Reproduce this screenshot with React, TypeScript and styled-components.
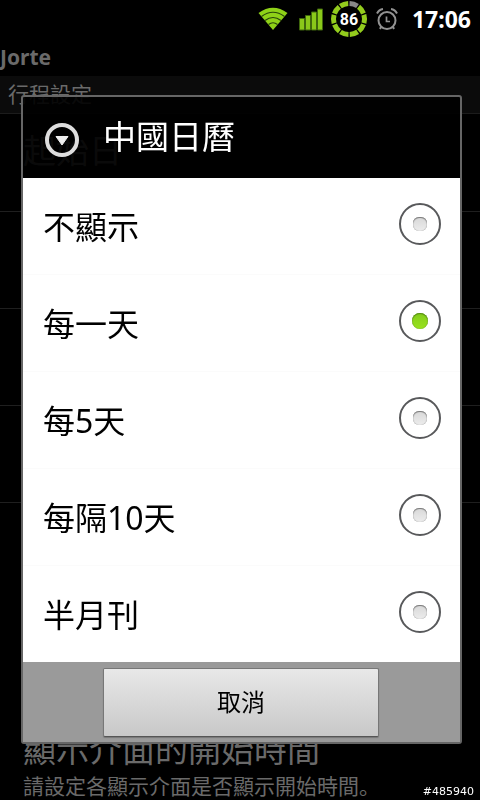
import React, { useState } from "react";
import styled, { createGlobalStyle } from "styled-components";

const GlobalStyle = createGlobalStyle`
  * { box-sizing: border-box; }
  body {
    margin: 0;
    background: #000;
    font-family: "Noto Sans", "Noto Sans CJK TC", sans-serif;
  }
`;

const Screen = styled.div`
  display: flex;
  flex-direction: column;
  height: 100vh;
  overflow: hidden;
  background: #000;
  color: #6a6a6a;
`;

const StatusBar = styled.header`
  display: flex;
  flex: none;
  align-items: center;
  justify-content: flex-end;
  height: 38px;
  padding-right: 9px;
  color: #fff;
`;

const StatusIcon = styled.svg<{ $gap: number }>`
  flex: none;
  display: block;
  margin-right: ${(p) => p.$gap}px;
`;

const Clock = styled.time`
  font-size: 23px;
  line-height: 38px;
  font-weight: 700;
`;

const AppTitle = styled.h1`
  flex: none;
  margin: 0;
  height: 38px;
  font-size: 21px;
  line-height: 38px;
  font-weight: 700;
`;

const SectionTitle = styled.h2`
  flex: none;
  margin: 0;
  height: 38px;
  padding-left: 8px;
  border-bottom: 1px solid #1c1c1c;
  background: #0b0b0b;
  font-size: 21px;
  line-height: 36px;
  font-weight: 400;
`;

const SettingList = styled.ul`
  display: flex;
  flex: 1;
  flex-direction: column;
  margin: 0;
  padding: 1px 0 0;
  list-style: none;
`;

const SettingRow = styled.li`
  height: 97px;
  padding: 16px 23px;
  border-bottom: 1px solid #1f1f1f;

  &:last-child {
    display: flex;
    flex: 1;
    flex-direction: column;
    justify-content: flex-end;
    padding-bottom: 0;
    border-bottom: 0;
  }
`;

const SettingName = styled.div`
  font-size: 33px;
  line-height: 40px;
`;

const SettingNote = styled.div`
  padding-top: 2px;
  font-family: "Noto Sans", "Noto Sans CJK SC", sans-serif;
  font-size: 21px;
  line-height: 28px;
  white-space: nowrap;
`;

const Overlay = styled.div`
  position: fixed;
  inset: 0;
  display: flex;
  align-items: center;
  padding: 38px 18px 0 21px;
`;

const Dialog = styled.section`
  flex: 1;
  border: 2px solid #666;
  border-radius: 3px;
  background: rgba(0, 0, 0, 0.9);
`;

const DialogHeader = styled.div`
  display: flex;
  align-items: center;
  gap: 24px;
  height: 81px;
  padding: 5px 22px 0;
  color: #fff;
`;

const DialogTitle = styled.h2`
  margin: 0;
  padding-bottom: 6px;
  font-size: 33px;
  line-height: 40px;
  font-weight: 400;
`;

const Options = styled.div`
  background: #fff;
  color: #000;
`;

const Option = styled.label`
  display: flex;
  align-items: center;
  justify-content: space-between;
  height: 97px;
  padding: 0 19px 4px 20px;
  border-bottom: 1px solid #fbfbfb;

  &:last-child {
    height: 96px;
    border-bottom: 0;
  }
`;

const OptionText = styled.span`
  padding-top: 6px;
  font-size: 32px;
  line-height: 40px;
`;

const Radio = styled.input`
  appearance: none;
  display: grid;
  place-items: center;
  width: 42px;
  height: 42px;
  margin: 0;
  border: 2px solid #58595b;
  border-radius: 50%;
  background: #fff;

  &::before {
    content: "";
    width: 14px;
    height: 14px;
    border-radius: 6px;
    background: linear-gradient(#d8d8d8, #ececec);
    box-shadow: inset 0 1px 1px #777, inset 0 0 1px #999;
  }

  &:checked::before {
    width: 16px;
    height: 16px;
    border-radius: 50%;
    background: linear-gradient(#83cc1c, #99e21e);
    box-shadow: inset 0 1px 1px #568a14, inset 0 0 1px #568a14;
  }
`;

const DialogFooter = styled.div`
  padding: 6px 81px 5px 80px;
  background: #9a9a9a;
`;

const CancelButton = styled.button`
  display: block;
  width: 100%;
  height: 69px;
  padding: 0;
  border: 1px solid #777;
  border-bottom-color: #555;
  border-radius: 2px;
  background: linear-gradient(#e8e8e8, #c8c8c8);
  box-shadow: 0 1px 1px #777;
  color: #000;
  font-family: inherit;
  font-size: 24px;
  line-height: 32px;
`;

const ImageTag = styled.small`
  position: fixed;
  right: 6px;
  bottom: 1px;
  color: #fff;
  font-family: "DejaVu Sans", sans-serif;
  font-size: 11px;
  line-height: 14px;
`;

const WifiIcon = () => (
  <StatusIcon $gap={11} width="30" height="24" viewBox="0 0 30 24" aria-label="Wi-Fi">
    <path d="M15 23 L0.5 6 Q15 -4.500 29.500 6 Z" fill="#8fd118" />
    <g fill="none" stroke="#27440a" strokeWidth="1.200">
      <path d="M3.500 9.500 Q15 1 26.500 9.500" />
      <path d="M7 13.500 Q15 7.500 23 13.500" />
      <path d="M10.500 17.500 Q15 14 19.500 17.500" />
    </g>
  </StatusIcon>
);

const SignalIcon = () => (
  <StatusIcon $gap={6} width="25" height="24" viewBox="0 0 25 24" aria-label="Signal">
    <g fill="#8ac81a" stroke="#3f660c" strokeWidth="1">
      <path d="M0.500 11.500h5v11.500h-5z" />
      <path d="M6.500 8.500h5v14.500h-5z" />
      <path d="M12.500 5h5v18h-5z" />
      <path d="M18.500 2h5v21h-5z" />
    </g>
  </StatusIcon>
);

const BatteryIcon = () => (
  <StatusIcon $gap={8} width="38" height="38" viewBox="0 0 38 38" aria-label="86%">
    {Array.from({ length: 10 }, (_, i) => (
      <circle
        key={i}
        cx="19"
        cy="19"
        r="15.500"
        fill="none"
        stroke={i === 0 ? "#888" : "#93cc1d"}
        strokeWidth="5"
        pathLength="100"
        strokeDasharray="8.700 91.300"
        transform={`rotate(${i * 36 - 88} 19 19)`}
      />
    ))}
    <text
      x="19"
      y="25"
      fill="#fff"
      fontFamily="Roboto, sans-serif"
      fontSize="16"
      fontWeight="700"
      textAnchor="middle"
    >
      86
    </text>
  </StatusIcon>
);

const AlarmIcon = () => (
  <StatusIcon $gap={14} width="22" height="24" viewBox="0 0 22 24" aria-label="Alarm">
    <g fill="none" stroke="#929292" strokeWidth="2">
      <circle cx="11" cy="13.500" r="8.500" />
      <path d="M1 6.500 Q3 2.500 7 2 M15 2 Q19 2.500 21 6.500" />
      <path d="M5 20 L4 22 M17 20 L18 22" />
      <path d="M10.500 9.500v5h3.500" strokeWidth="1.700" />
    </g>
  </StatusIcon>
);

const DropIcon = () => (
  <svg width="34" height="34" viewBox="0 0 34 34" aria-hidden="true">
    <circle cx="17" cy="17" r="15" fill="none" stroke="#dedede" strokeWidth="4" />
    <path d="M11 13.500h12l-6 8.500z" fill="#eee" stroke="#eee" strokeLinejoin="round" />
  </svg>
);

const choices = ["不顯示", "每一天", "每5天", "每隔10天", "半月刊"];

export default function App() {
  const [selected, setSelected] = useState("每一天");

  return (
    <>
      <GlobalStyle />
      <Screen>
        <StatusBar>
          <WifiIcon />
          <SignalIcon />
          <BatteryIcon />
          <AlarmIcon />
          <Clock>17:06</Clock>
        </StatusBar>
        <AppTitle>Jorte</AppTitle>
        <SectionTitle>行程設定</SectionTitle>
        <SettingList>
          <SettingRow>
            <SettingName>起始日</SettingName>
          </SettingRow>
          <SettingRow />
          <SettingRow />
          <SettingRow />
          <SettingRow>
            <SettingName>顯示介面的開始時間</SettingName>
            <SettingNote>請設定各顯示介面是否顯示開始時間。</SettingNote>
          </SettingRow>
        </SettingList>
      </Screen>
      <Overlay>
        <Dialog role="dialog" aria-labelledby="dialog-title">
          <DialogHeader>
            <DropIcon />
            <DialogTitle id="dialog-title">中國日曆</DialogTitle>
          </DialogHeader>
          <Options role="radiogroup" aria-labelledby="dialog-title">
            {choices.map((choice) => (
              <Option key={choice}>
                <OptionText>{choice}</OptionText>
                <Radio
                  type="radio"
                  name="calendar"
                  checked={selected === choice}
                  onChange={() => setSelected(choice)}
                />
              </Option>
            ))}
          </Options>
          <DialogFooter>
            <CancelButton type="button">取消</CancelButton>
          </DialogFooter>
        </Dialog>
      </Overlay>
      <ImageTag>#485940</ImageTag>
    </>
  );
}
